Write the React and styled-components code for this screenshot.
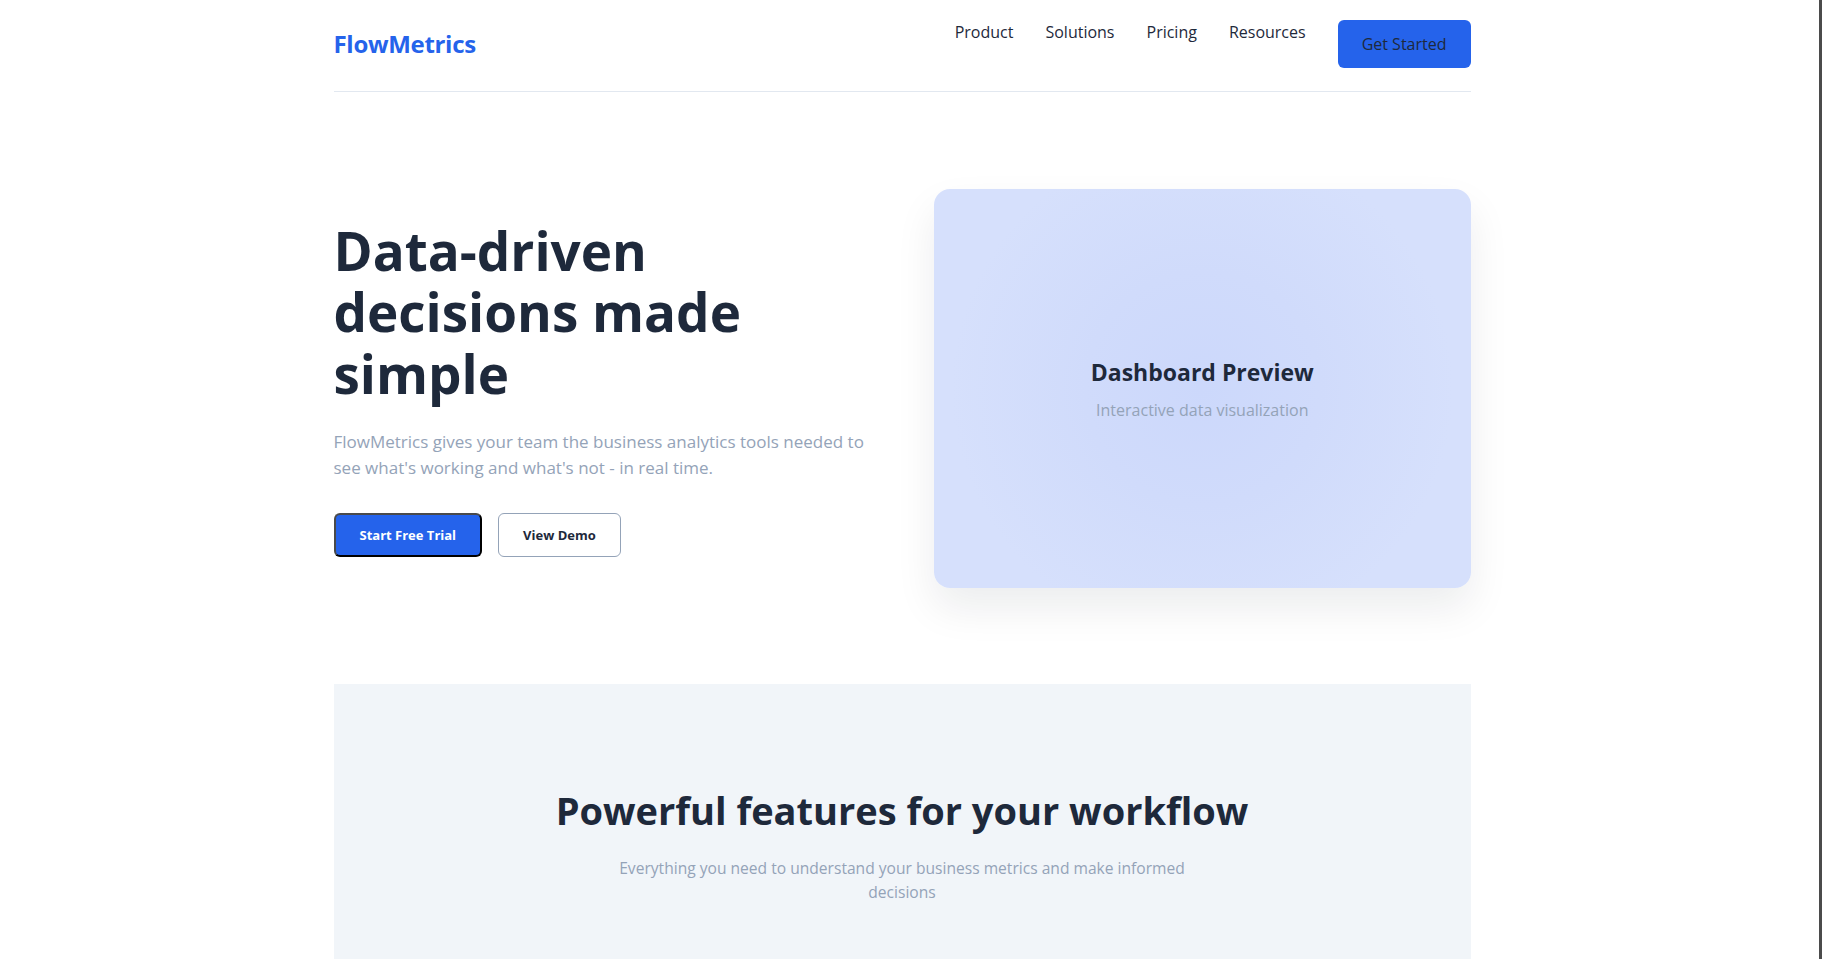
import React from 'react'
import styled, { createGlobalStyle } from 'styled-components'

const GlobalStyle = createGlobalStyle`
  * {
    box-sizing: border-box;
  }
  body {
    margin: 0;
    padding-right: 18px;
    background: #ffffff;
    font-family: 'Open Sans', 'Noto Sans', sans-serif;
    color: #1e293b;
  }
`;

const ScrollEdge = styled.div`
  position: fixed;
  top: 0;
  right: 0;
  bottom: 0;
  width: 3px;
  background: #4b4b4b;
`;

const Page = styled.div`
  width: 100%;
  max-width: 1137px;
  margin: 0 auto;
`;

const Nav = styled.nav`
  display: flex;
  justify-content: space-between;
  align-items: center;
  padding: 20px 0 23px;
  border-bottom: 1px solid #e2e8f0;
`;

const Logo = styled.div`
  font-size: 24px;
  font-weight: 700;
  color: #2563eb;
  letter-spacing: -0.3px;
  margin-top: -2px;
`;

const NavRight = styled.div`
  display: flex;
  align-items: flex-start;
  gap: 32px;
`;

const NavLinks = styled.ul`
  display: flex;
  gap: 32px;
  list-style: none;
  margin: 0;
  padding: 0;
`;

const NavLink = styled.li`
  font-size: 16px;
  font-weight: 500;
  line-height: 24px;
  color: #1e293b;
`;

const NavButton = styled.button`
  font-family: inherit;
  font-size: 16px;
  font-weight: 500;
  line-height: 24px;
  padding: 12px 24px;
  border: none;
  border-radius: 6px;
  background: #2563eb;
  color: #1e293b;
`;

const Hero = styled.section`
  display: grid;
  grid-template-columns: 1fr 1fr;
  gap: 64px;
  align-items: center;
  padding: 97px 0 96px;
`;

const HeroText = styled.div`
  display: flex;
  flex-direction: column;
`;

const Title = styled.h1`
  margin: 0;
  font-size: 53px;
  line-height: 61.6px;
  font-weight: 700;
  color: #1e293b;
`;

const Lead = styled.p`
  margin: 25px 0 32px;
  font-size: 17px;
  line-height: 26px;
  color: #94a3b8;
`;

const Actions = styled.div`
  display: flex;
  gap: 16px;
`;

const Button = styled.button`
  font-family: inherit;
  font-size: 13px;
  font-weight: 700;
  line-height: 16px;
  padding: 12px 24px;
  border-radius: 6px;
  border-style: solid;
  border-width: ${p => (p.$primary ? '2px' : '1px')};
  border-color: ${p => (p.$primary ? '#4a4a4a #000 #000 #4a4a4a' : '#94a3b8')};
  background: ${p => (p.$primary ? '#2563eb' : '#ffffff')};
  color: ${p => (p.$primary ? '#ffffff' : '#1e293b')};
`;

const Preview = styled.div`
  height: 399px;
  border-radius: 16px;
  background: radial-gradient(circle at 50% 50%, #ccd8fb 0%, #d0dbfb 35%, #d6e0fc 75%);
  box-shadow: 0 20px 40px rgba(15, 23, 42, 0.08);
  display: flex;
  flex-direction: column;
  align-items: center;
  justify-content: center;
`;

const PreviewTitle = styled.h3`
  margin: 0;
  font-size: 23px;
  line-height: 30px;
  font-weight: 700;
  color: #1e293b;
`;

const PreviewText = styled.p`
  margin: 12px 0 0;
  font-size: 16px;
  line-height: 22px;
  color: #94a3b8;
`;

const Features = styled.section`
  background: #f1f5f9;
  padding: 102px 32px 160px;
  text-align: center;
`;

const SectionTitle = styled.h2`
  margin: 0;
  font-size: 38px;
  line-height: 48px;
  font-weight: 700;
  color: #1e293b;
`;

const SectionText = styled.p`
  margin: 22px auto 0;
  max-width: 610px;
  font-size: 15.6px;
  line-height: 24px;
  color: #94a3b8;
`;

function App() {
  return (
    <>
      <GlobalStyle />
      <ScrollEdge />
      <Page>
        <Nav>
          <Logo>FlowMetrics</Logo>
          <NavRight>
            <NavLinks>
              <NavLink>Product</NavLink>
              <NavLink>Solutions</NavLink>
              <NavLink>Pricing</NavLink>
              <NavLink>Resources</NavLink>
            </NavLinks>
            <NavButton>Get Started</NavButton>
          </NavRight>
        </Nav>

        <Hero>
          <HeroText>
            <Title>Data-driven decisions made simple</Title>
            <Lead>
              FlowMetrics gives your team the business analytics tools needed to see what's
              working and what's not - in real time.
            </Lead>
            <Actions>
              <Button $primary>Start Free Trial</Button>
              <Button>View Demo</Button>
            </Actions>
          </HeroText>
          <Preview>
            <PreviewTitle>Dashboard Preview</PreviewTitle>
            <PreviewText>Interactive data visualization</PreviewText>
          </Preview>
        </Hero>

        <Features>
          <SectionTitle>Powerful features for your workflow</SectionTitle>
          <SectionText>
            Everything you need to understand your business metrics and make informed decisions
          </SectionText>
        </Features>
      </Page>
    </>
  )
}

export default App
